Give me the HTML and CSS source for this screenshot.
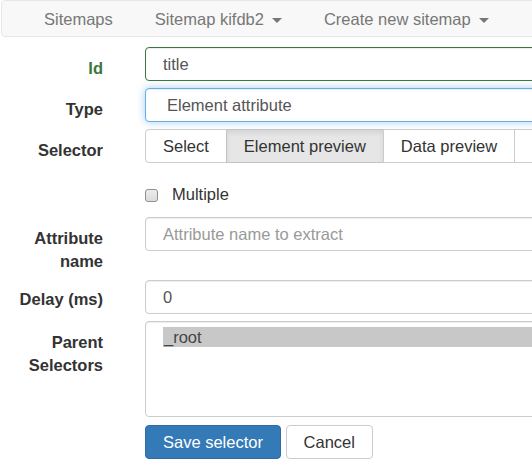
FILE: index.html
```
<!DOCTYPE html>
<html>
<head>
    <meta charset="utf-8">
    <title>Edit selector</title>
    <link rel="stylesheet" href="styles.css">
</head>
<body>
    <div class="page">
        <nav class="navbar">
            <ul class="nav">
                <li><a href="#">Sitemaps</a></li>
                <li><a href="#">Sitemap kifdb2<span class="caret"></span></a></li>
                <li><a href="#">Create new sitemap<span class="caret"></span></a></li>
            </ul>
        </nav>

        <form class="selector-form">
            <div class="form-row has-success">
                <label class="row-label" for="selectorId">Id</label>
                <div class="row-control">
                    <input id="selectorId" class="field" type="text" value="title">
                </div>
            </div>

            <div class="form-row">
                <label class="row-label" for="selectorType">Type</label>
                <div class="row-control">
                    <select id="selectorType" class="field field-select is-focused">
                        <option>Element attribute</option>
                    </select>
                </div>
            </div>

            <div class="form-row">
                <label class="row-label">Selector</label>
                <div class="row-control">
                    <div class="btn-group">
                        <button type="button" class="btn">Select</button>
                        <button type="button" class="btn active">Element preview</button>
                        <button type="button" class="btn">Data preview</button>
                        <button type="button" class="btn btn-more"></button>
                    </div>
                </div>
            </div>

            <div class="form-row">
                <div class="row-control check-row">
                    <label class="check">
                        <input type="checkbox">
                        <span>Multiple</span>
                    </label>
                </div>
            </div>

            <div class="form-row tall">
                <label class="row-label" for="attributeName">Attribute name</label>
                <div class="row-control">
                    <input id="attributeName" class="field" type="text" placeholder="Attribute name to extract">
                </div>
            </div>

            <div class="form-row">
                <label class="row-label short" for="delay">Delay (ms)</label>
                <div class="row-control">
                    <input id="delay" class="field" type="text" value="0">
                </div>
            </div>

            <div class="form-row">
                <label class="row-label">Parent Selectors</label>
                <div class="row-control">
                    <div class="listbox">
                        <div class="option selected">_root</div>
                    </div>
                </div>
            </div>

            <div class="form-row actions">
                <div class="row-control">
                    <button type="button" class="btn btn-primary">Save selector</button>
                    <button type="button" class="btn">Cancel</button>
                </div>
            </div>
        </form>
    </div>
</body>
</html>
```

FILE: styles.css
```
body {
    margin: 0;
    overflow: hidden;
    background: #fff;
    font-family: "Liberation Sans", Arial, sans-serif;
    font-size: 16.5px;
    line-height: 22px;
    color: #333;
}

.page {
    width: 760px;
    padding-left: 1px;
}

/* top navigation */
.navbar {
    height: 37px;
    box-sizing: border-box;
    background: #f8f8f8;
    border: 1px solid #e7e7e7;
    border-radius: 4px;
}

.nav {
    display: flex;
    margin: 0 0 0 21px;
    padding: 0;
    list-style: none;
}

.nav a {
    display: block;
    padding: 7px 21px 6px;
    color: #777;
    text-decoration: none;
}

.caret {
    display: inline-block;
    width: 0;
    height: 0;
    margin-left: 8px;
    vertical-align: middle;
    border-top: 5px solid #777;
    border-left: 5px solid transparent;
    border-right: 5px solid transparent;
}

/* form */
.selector-form {
    margin-top: 10px;
}

.form-row {
    display: grid;
    grid-template-columns: 102px 1fr;
    column-gap: 42px;
    margin-bottom: 7px;
}

.row-label {
    padding-top: 10px;
    text-align: right;
    font-weight: bold;
    line-height: 22.5px;
}

.row-label.short {
    padding-top: 8px;
}

.tall .row-label {
    width: 80px;
    justify-self: end;
    padding-bottom: 1px;
}

.form-row > .row-control:only-child {
    grid-column: 2;
}

.has-success .row-label {
    color: #3c763d;
}

.field {
    display: block;
    width: 100%;
    height: 34px;
    box-sizing: border-box;
    margin: 0;
    padding: 5px 17px;
    font: inherit;
    line-height: 22px;
    color: #555;
    background: #fff;
    border: 1px solid #ccc;
    border-radius: 4px;
    box-shadow: inset 0 1px 1px rgba(0, 0, 0, 0.075);
    outline: none;
}

.field::placeholder {
    color: #999;
}

.has-success .field {
    border-color: #3c763d;
}

.field-select {
    -webkit-appearance: none;
    appearance: none;
    padding-left: 21px;
}

.field.is-focused {
    border-color: #66afe9;
    box-shadow: inset 0 1px 1px rgba(0, 0, 0, 0.075), 0 0 8px rgba(102, 175, 233, 0.6);
}

/* buttons */
.btn {
    display: inline-block;
    height: 34px;
    box-sizing: border-box;
    margin: 0;
    padding: 5px 17px;
    font: inherit;
    line-height: 22px;
    color: #333;
    background: #fff;
    border: 1px solid #ccc;
    border-radius: 4px;
    white-space: nowrap;
    cursor: pointer;
}

.btn-primary {
    color: #fff;
    background: #337ab7;
    border-color: #2e6da4;
}

.btn-group {
    display: flex;
}

.btn-group .btn {
    border-radius: 0;
}

.btn-group .btn + .btn {
    margin-left: -1px;
}

.btn-group .btn:first-child {
    border-radius: 4px 0 0 4px;
}

.btn-group .btn.active {
    background: #e6e6e6;
    border-color: #c4c4c4;
    box-shadow: inset 0 3px 5px rgba(0, 0, 0, 0.08);
}

.btn-more {
    width: 60px;
}

/* checkbox */
.check-row {
    padding: 13px 0 5px;
}

.check {
    display: flex;
    align-items: center;
}

.check input {
    -webkit-appearance: none;
    appearance: none;
    width: 13px;
    height: 13px;
    margin: 3px 14px 0 0;
    background: linear-gradient(#ececec, #dcdcdc);
    border: 1px solid #8f8f8f;
    border-radius: 3px;
}

/* parent selectors list */
.listbox {
    height: 96px;
    box-sizing: border-box;
    padding: 5px 17px;
    border: 1px solid #ccc;
    border-radius: 4px;
    box-shadow: inset 0 1px 1px rgba(0, 0, 0, 0.075);
}

.option {
    padding-left: 1px;
    line-height: 20px;
    color: #444;
}

.option.selected {
    background: #c8c8c8;
}

.actions .row-control {
    padding-top: 1px;
}
```
